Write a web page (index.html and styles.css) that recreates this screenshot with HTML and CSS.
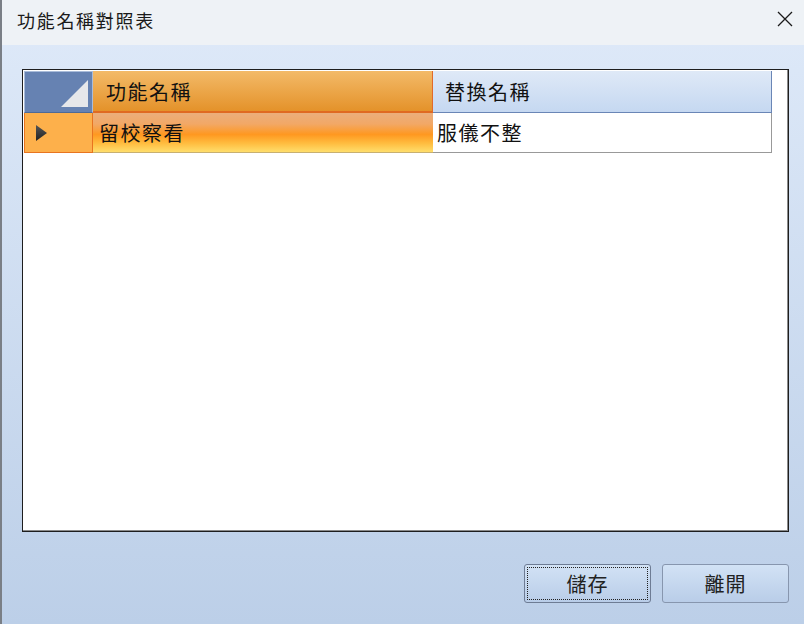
FILE: index.html
```html
<!DOCTYPE html>
<html lang="zh-Hant">
<head>
  <meta charset="UTF-8">
  <title>功能名稱對照表</title>
  <link rel="stylesheet" href="styles.css">
</head>
<body>
  <div class="window">
    <div class="titlebar">
      <span class="title">功能名稱對照表</span>
      <svg class="close" width="16" height="16" viewBox="0 0 16 16">
        <path d="M1 1 L15 15 M15 1 L1 15" stroke="#1a1a1a" stroke-width="1.3" fill="none"/>
      </svg>
    </div>

    <div class="content">
      <div class="grid">
        <div class="row header-row">
          <div class="cell corner">
            <svg width="67" height="40" viewBox="0 0 67 40">
              <polygon points="36,35 63,35 63,8" fill="#e6e7ea"/>
            </svg>
          </div>
          <div class="cell head head-hot">功能名稱</div>
          <div class="cell head head-normal">替換名稱</div>
        </div>
        <div class="row data-row">
          <div class="cell row-head">
            <svg width="12" height="18" viewBox="0 0 12 18">
              <defs>
                <linearGradient id="arrow" x1="0" y1="0" x2="0" y2="1">
                  <stop offset="0" stop-color="#555"/>
                  <stop offset="1" stop-color="#222"/>
                </linearGradient>
              </defs>
              <polygon points="1,1 12,9 1,17" fill="url(#arrow)"/>
            </svg>
          </div>
          <div class="cell data data-selected">留校察看</div>
          <div class="cell data data-plain">服儀不整</div>
        </div>
      </div>

      <div class="buttons">
        <button class="btn btn-focus"><span>儲存</span></button>
        <button class="btn">離開</button>
      </div>
    </div>
  </div>
</body>
</html>
```

FILE: styles.css
```css
body {
  margin: 0;
  font-family: "Noto Sans CJK TC", "Noto Sans", sans-serif;
  color: #111;
}
.window {
  width: 804px;
  height: 624px;
  display: flex;
  flex-direction: column;
  border-left: 2px solid #7a7f86;
  box-sizing: border-box;
  background: linear-gradient(#dfeaf9, #bccfe8);
}
.titlebar {
  height: 45px;
  flex: none;
  display: flex;
  align-items: center;
  justify-content: space-between;
  padding: 0 11px 0 15px;
  background-color: #eef2f6;
}
.title {
  font-size: 18px;
  letter-spacing: 1.7px;
  color: #1a1a1a;
  margin-top: -6px;
}
.close {
  margin-top: -7px;
}
.content {
  flex: 1;
  display: flex;
  flex-direction: column;
  padding: 24px 15px 21px 20px;
}
.grid {
  width: 767px;
  height: 463px;
  box-sizing: border-box;
  border: 1px solid #1e1e1e;
  box-shadow: inset -1px -1px 0 #8a8a8a;
  background-color: #fff;
  padding: 1px;
}
.row {
  display: flex;
}
.cell {
  box-sizing: border-box;
  display: flex;
  align-items: center;
  font-size: 20px;
  letter-spacing: 1.5px;
}
.header-row {
  height: 42px;
}
.corner {
  width: 69px;
  background-color: #6682b2;
  border: 1px solid #a9bcda;
  border-bottom: 1px solid #4f6a96;
  padding: 0;
}
.head {
  padding-left: 13px;
}
.head-hot {
  width: 340px;
  background: linear-gradient(#f3ba68, #e4922a);
  border-right: 1px solid #e26a2a;
  border-bottom: 2px solid #e06a22;
}
.head-normal {
  width: 339px;
  padding-left: 12px;
  background: linear-gradient(#dfe9f7, #c5d8f1);
  border-right: 1px solid #6a86b6;
  border-bottom: 1px solid #6a86b6;
}
.data-row {
  height: 40px;
}
.row-head {
  width: 69px;
  background-color: #fdb04b;
  border: 1px solid #e8741f;
  border-top: none;
  padding-left: 10px;
}
.data {
  padding-left: 6px;
}
.data-selected {
  width: 340px;
  background: linear-gradient(#ebae7c 0%, #f2a866 28%, #ff9820 55%, #ffbd40 78%, #ffde6c 100%);
  border-bottom: 1px solid #c8b070;
}
.data-plain {
  width: 339px;
  padding-left: 4px;
  background-color: #fff;
  border-right: 1px solid #999;
  border-bottom: 1px solid #999;
}
.buttons {
  display: flex;
  justify-content: flex-end;
  gap: 11px;
  margin-top: 32px;
}
.btn {
  width: 127px;
  height: 39px;
  border: 1px solid #8796ae;
  border-radius: 3px;
  background: linear-gradient(#d2e2f5, #b9cde8);
  font-family: "Noto Sans CJK TC", "Noto Sans", sans-serif;
  font-size: 20px;
  letter-spacing: 1px;
  color: #222;
  padding: 0;
}
.btn-focus {
  border-color: #6e7c94;
  padding: 2px;
}
.btn-focus span {
  display: flex;
  align-items: center;
  justify-content: center;
  height: 100%;
  border: 1px dotted #222;
  box-sizing: border-box;
}
```
